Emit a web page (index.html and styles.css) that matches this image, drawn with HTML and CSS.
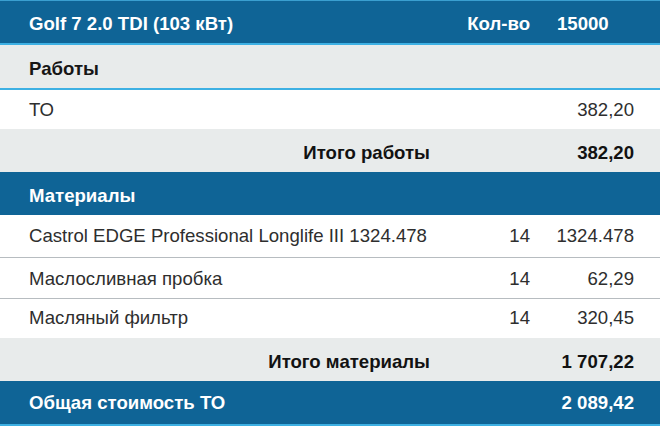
FILE: index.html
```html
<!DOCTYPE html>
<html lang="ru">
<head>
<meta charset="utf-8">
<link rel="stylesheet" href="styles.css">
</head>
<body>
<div class="sheet">
  <div class="row head top">
    <div class="name">Golf 7 2.0 TDI (103 кВт)</div>
    <div class="qty">Кол-во</div>
    <div class="price left">15000</div>
  </div>
  <div class="row section">
    <div class="name">Работы</div>
    <div class="qty"></div>
    <div class="price"></div>
  </div>
  <div class="row item first">
    <div class="name">ТО</div>
    <div class="qty"></div>
    <div class="price">382,20</div>
  </div>
  <div class="row total">
    <div class="name">Итого работы</div>
    <div class="qty"></div>
    <div class="price">382,20</div>
  </div>
  <div class="row head">
    <div class="name">Материалы</div>
    <div class="qty"></div>
    <div class="price"></div>
  </div>
  <div class="row item tall">
    <div class="name">Castrol EDGE Professional Longlife III 1324.478</div>
    <div class="qty">14</div>
    <div class="price">1324.478</div>
  </div>
  <div class="row item mid">
    <div class="name">Маслосливная пробка</div>
    <div class="qty">14</div>
    <div class="price">62,29</div>
  </div>
  <div class="row item last">
    <div class="name">Масляный фильтр</div>
    <div class="qty">14</div>
    <div class="price">320,45</div>
  </div>
  <div class="row total">
    <div class="name">Итого материалы</div>
    <div class="qty"></div>
    <div class="price">1 707,22</div>
  </div>
  <div class="row head grand">
    <div class="name">Общая стоимость ТО</div>
    <div class="qty"></div>
    <div class="price">2 089,42</div>
  </div>
</div>
</body>
</html>
```

FILE: styles.css
```css
html, body {
  margin: 0;
  padding: 0;
  background: #ffffff;
}

body {
  font-family: "Liberation Sans", Arial, Helvetica, sans-serif;
  font-size: 18.6px;
  color: #2e2e2e;
}

.sheet {
  width: 660px;
  border-top: 1px solid #3a9fd0;
}

.row {
  display: grid;
  grid-template-columns: 401px 100px 104px;
  align-items: center;
  padding: 0 26px 0 29px;
  box-sizing: border-box;
  height: 43px;
  white-space: nowrap;
}

.qty,
.price {
  text-align: right;
}

.price.left {
  text-align: left;
  padding-left: 27px;
}

.head {
  background: #0f6496;
  color: #ffffff;
  font-weight: bold;
  padding-top: 4px;
}

.head.top {
  height: 44px;
  border-bottom: 2px solid #3db0e3;
}

.section {
  background: #e8ebeb;
  color: #161616;
  font-weight: bold;
  height: 45px;
  padding-top: 4px;
  border-bottom: 2px solid #3db0e3;
}

.item {
  background: #ffffff;
}

.item.first {
  height: 39px;
}

.item.tall {
  height: 42px;
}

.item + .item {
  border-top: 1px solid #b7bcc0;
}

.item.mid {
  height: 41px;
  padding-top: 1px;
}

.item.last {
  height: 40px;
  padding-bottom: 2px;
}

.total {
  background: #e8ebeb;
  color: #121212;
  font-weight: bold;
  padding-top: 4px;
}

.total .name {
  text-align: right;
}

.head.grand {
  height: 45px;
  padding-top: 0;
  border-bottom: 2px solid #3db0e3;
}
```
